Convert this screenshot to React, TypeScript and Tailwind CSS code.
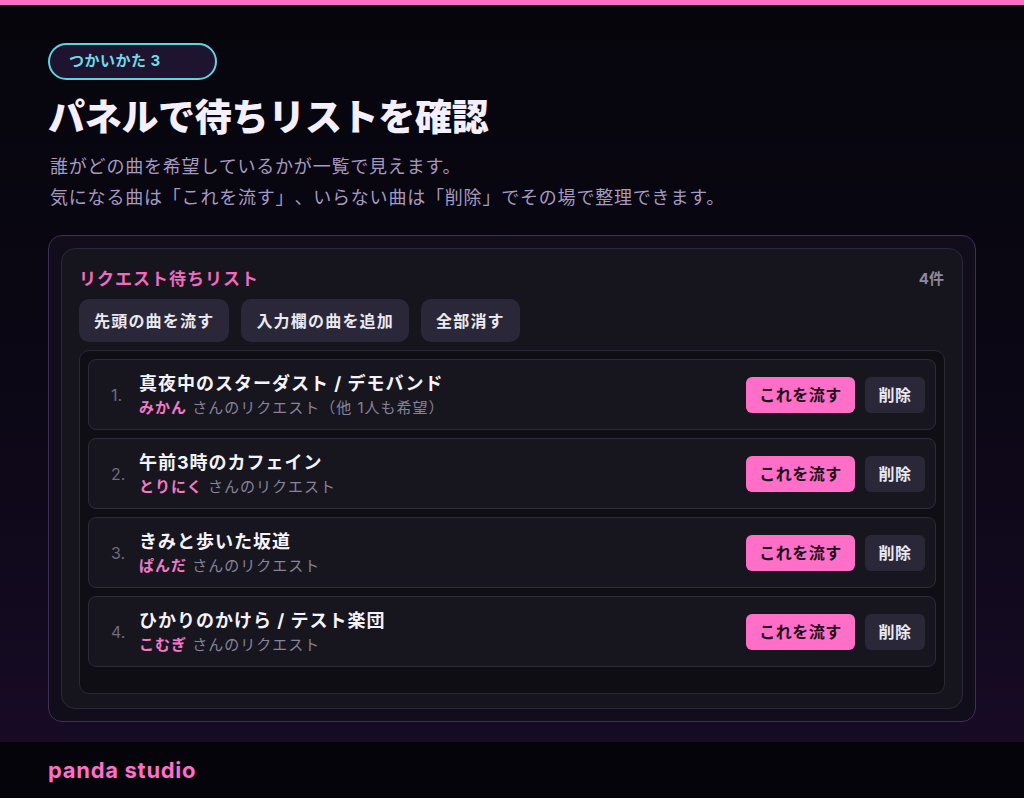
import React from "react"

const font = { fontFamily: 'Inter, "Noto Sans CJK JP", sans-serif' }

const requests = [
  { title: "真夜中のスターダスト / デモバンド", name: "みかん", note: "さんのリクエスト（他 1人も希望）" },
  { title: "午前3時のカフェイン", name: "とりにく", note: "さんのリクエスト" },
  { title: "きみと歩いた坂道", name: "ぱんだ", note: "さんのリクエスト" },
  { title: "ひかりのかけら / テスト楽団", name: "こむぎ", note: "さんのリクエスト" },
]

export default function App() {
  return (
    <div className="min-h-[798px] w-[1024px] flex flex-col bg-[#06050c]" style={font}>
      <div className="h-[5px] bg-[#ff6fc8]" />
      <main className="flex-1 bg-gradient-to-b from-[#06050c] via-[#0b0714] to-[#170b25] px-12 pt-[38px] pb-[19px]">
        <div className="inline-flex items-center h-[37px] w-[169px] rounded-full border-2 border-[#5fd3e0] bg-[#1f1430] pl-[19px] text-[15px] tracking-[0.5px] font-bold text-[#6fdbe8]">
          つかいかた 3
        </div>
        <h1 className="mt-[14px] text-[37px] leading-[48px] font-black tracking-[-0.3px] text-[#f3effc]">
          パネルで待ちリストを確認
        </h1>
        <p className="mt-[9px] pl-[2px] text-[18px] leading-[31px] tracking-[0.8px] text-[#a69ac0] [text-spacing-trim:space-all]">
          誰がどの曲を希望しているかが一覧で見えます。
          <br />
          気になる曲は「これを流す」、いらない曲は「削除」でその場で整理できます。
        </p>

        <section className="mt-[22px] rounded-[14px] border border-[#3d2f58] bg-[#110d1a] p-3">
          <div className="rounded-[14px] border border-[#2b2937] bg-[#16151e] px-[17px] pt-[18px] pb-[14px]">
            <div className="flex items-center justify-between">
              <h2 className="text-[17px] leading-[24px] tracking-[1px] font-bold text-[#f06bbf]">リクエスト待ちリスト</h2>
              <span className="pr-[1px] text-[15px] font-bold text-[#8d8a9b]">4件</span>
            </div>
            <div className="mt-[8px] flex gap-3">
              {["先頭の曲を流す", "入力欄の曲を追加", "全部消す"].map((label) => (
                <button
                  key={label}
                  type="button"
                  className="h-[43px] rounded-[10px] bg-[#2a2838] px-[15px] text-[16px] tracking-[1.2px] font-bold text-[#ebe9f2]"
                >
                  {label}
                </button>
              ))}
            </div>
            <div className="mt-[8px] rounded-[10px] border border-[#2a2835] bg-[#0f0e15] px-2 pt-2 pb-[26px] flex flex-col gap-2">
              {requests.map((r, i) => (
                <div
                  key={r.name}
                  className="h-[71px] flex items-center rounded-[8px] border border-[#2d2b38] bg-[#17161f] pl-[22px] pr-[10px]"
                >
                  <span className="w-[28px] text-[16px] text-[#6f6c7d]">{i + 1}.</span>
                  <div className="flex-1 flex flex-col">
                    <span className="text-[18px] leading-[25px] tracking-[1px] font-bold text-[#f5f3fa]">{r.title}</span>
                    <span className="text-[15px] leading-[23px] tracking-[1px] text-[#86839a]">
                      <span className="font-bold text-[#f07ac6]">{r.name}</span> {r.note}
                    </span>
                  </div>
                  <button
                    type="button"
                    className="h-[36px] w-[109px] rounded-[6px] bg-[#ff6ec7] text-[16px] tracking-[0.5px] font-bold text-[#1c0f1c]"
                  >
                    これを流す
                  </button>
                  <button
                    type="button"
                    className="ml-[10px] h-[36px] w-[60px] rounded-[6px] bg-[#2a2838] text-[16px] tracking-[0.5px] font-bold text-[#ebe9f2]"
                  >
                    削除
                  </button>
                </div>
              ))}
            </div>
          </div>
        </section>
      </main>
      <footer className="h-[56px] flex items-center px-12 bg-[#05040b]">
        <span className="text-[22px] tracking-[0.7px] font-bold text-[#ff6fc8]">panda studio</span>
      </footer>
    </div>
  )
}
